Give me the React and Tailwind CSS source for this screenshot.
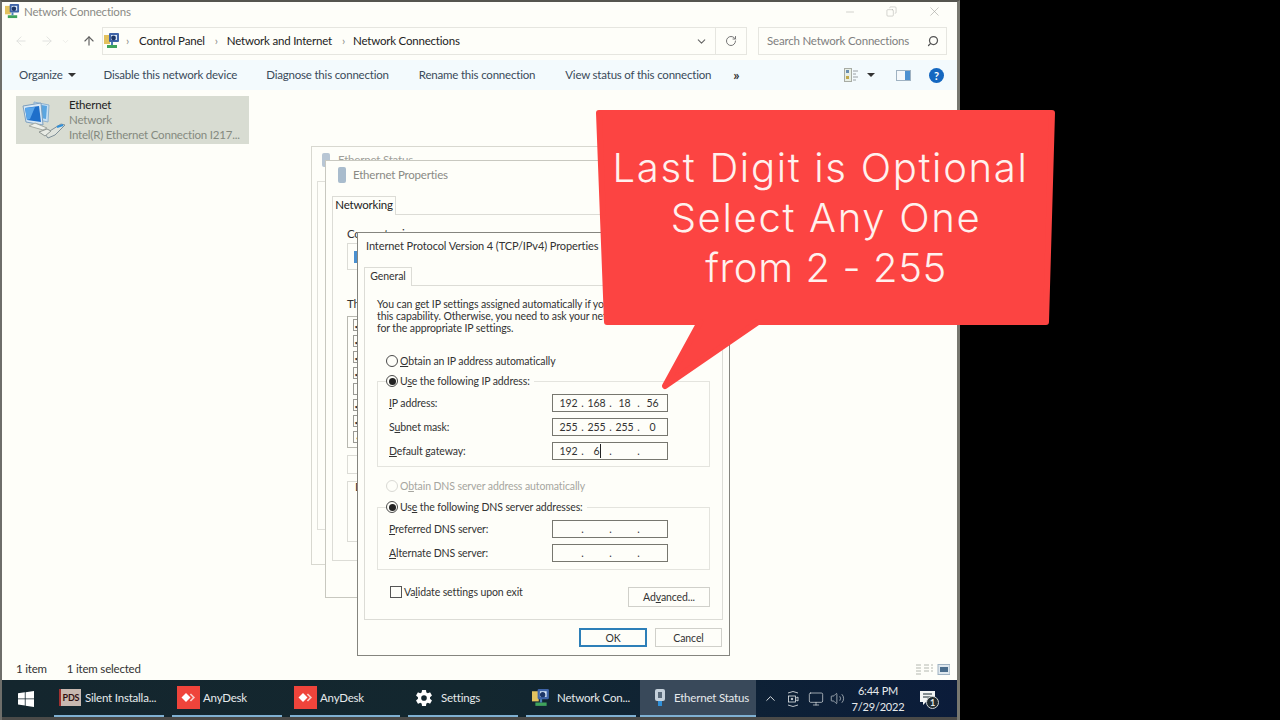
import React from "react";
import { ArrowLeft, ArrowRight, ArrowUp, ChevronDown, ChevronUp, RotateCw, Search, Minus, X, Copy, Monitor, Volume2 } from "lucide-react";
import { IoSettingsSharp } from "react-icons/io5";

const NetIcon = ({ size = 16 }) => (
    <svg width={size} height={size} viewBox="0 0 16 16">
        <rect x="0" y="2" width="6" height="9" fill="#e3c25e" />
        <rect x="5" y="0" width="10" height="9" rx="1" fill="#3f64a8" />
        <rect x="7" y="2" width="6" height="5" fill="#dbe9f8" />
        <circle cx="9.5" cy="5" r="2.4" fill="#1c3566" />
        <rect x="3" y="12" width="10" height="3" fill="#3fa35c" />
        <rect x="7" y="9" width="2" height="3" fill="#4d7fb8" />
    </svg>
);

const EthernetIcon = () => (
    <svg width="44" height="42" viewBox="0 0 44 42">
        <path d="M13 3 L28 6 L27 23 L13 20 Z" fill="#c6dff4" stroke="#8fb2cf" />
        <path d="M15 5 L26 7 L25 20 L15 18 Z" fill="#5aa5e0" />
        <path d="M2 7 L20 4 L22 26 L5 23 Z" fill="#d8e8f5" stroke="#7d9fbe" />
        <path d="M4 9 L18 7 L20 23 L6 21 Z" fill="#1e6fca" />
        <path d="M4 9 L14 8 L9 20 L6 21 Z" fill="#5aa6ea" />
        <path d="M8 27 L22 31 L26 29 L14 24 Z" fill="#eef0ea" stroke="#a6aaa2" />
        <path d="M24 35 L40 25 L44 26 L34 36 L27 39 Z" fill="#dfe3dc" stroke="#7f8f98" />
        <path d="M36 28 L42 26" stroke="#2f8fd8" strokeWidth="2" />
        <path d="M18 33 L26 30 L30 32 L24 37 Z" fill="#e8ebe4" stroke="#8f9692" />
    </svg>
);

const AnyDeskIcon = () => (
    <span className="w-[23px] h-[23px] bg-[#ef443b] flex items-center justify-center shrink-0">
        <svg width="15" height="11" viewBox="0 0 15 11">
            <path d="M5 1 L9.5 5.5 L5 10 L0.5 5.5 Z" fill="#ffffff" />
            <path d="M10 1.5 L14 5.5 L10 9.5 L8.8 8.5 L11.8 5.5 L8.8 2.5 Z" fill="#f8d0cc" />
        </svg>
    </span>
);

const Radio = ({ checked, disabled }) => (
    <span className={`w-3 h-3 rounded-full border flex items-center justify-center shrink-0 bg-[#fefef9] ${disabled ? "border-[#d9d9d4]" : "border-[#4a4a4a]"}`}>
        {checked && <span className="w-[7px] h-[7px] rounded-full bg-[#222222]" />}
    </span>
);

const IpField = ({ parts = ["", "", "", ""], caret }) => (
    <div className="w-[116px] h-[18px] pl-[4px] border border-[#77776f] bg-[#fefef9] flex items-center text-[#333333]">
        {parts.map((p, i) => (
            <React.Fragment key={i}>
                <span className="w-[23px] text-center relative">
                    {p}
                    {caret && i === 1 && <span className="absolute left-[15px] -top-px w-px h-[14px] bg-[#222222]" />}
                </span>
                {i < 3 && <span className="w-[5px] text-center">.</span>}
            </React.Fragment>
        ))}
    </div>
);

const IpRow = ({ label, ...rest }) => (
    <div className="flex items-center justify-between h-[18px]">
        <span>{label}</span>
        <IpField {...rest} />
    </div>
);

const TaskItem = ({ icon, label, active, width = "w-[110px]", pad = "pl-[4px]", gap = "gap-[6px]" }) => (
    <div className={`${width} ${pad} ${gap} h-full flex items-center border-b-2 border-[#7fb0d2] ${active ? "bg-[#39495a]" : ""}`}>
        {icon}
        <span className="whitespace-nowrap">{label}</span>
    </div>
);

const App = () => {
    return (
        <div className="relative w-[1280px] h-[720px] bg-black overflow-hidden font-['Lato',sans-serif] text-[11.5px] tracking-[-0.2px] text-[#333333]">
            {/* Explorer window */}
            <div className="w-[960px] h-[720px] flex flex-col bg-[#fefef9] border-l-2 border-r-[3px] border-t-2 border-l-[#6e6e6a] border-r-[#77776f] border-t-[#55554f]">
                {/* Title bar */}
                <div className="h-[19px] shrink-0 flex items-center pl-[3px] pr-[15px]">
                    <NetIcon size={15} />
                    <span className="ml-[4px] text-[#8a8a85]">Network Connections</span>
                    <div className="ml-auto flex items-center gap-[30px] text-[#a5a5a0]">
                        <Minus size={12} strokeWidth={1} />
                        <Copy size={11} strokeWidth={1} className="-scale-x-100" />
                        <X size={15} strokeWidth={1} />
                    </div>
                </div>
                {/* Address bar */}
                <div className="h-[34px] shrink-0 flex items-center pt-[6px] pl-[12px] pr-[10px]">
                    <ArrowLeft size={14} strokeWidth={1.5} className="text-[#dedfdb]" />
                    <ArrowRight size={14} strokeWidth={1.5} className="ml-[12px] text-[#dedfdb]" />
                    <ChevronDown size={9} className="ml-[7px] text-[#e8e8e4]" />
                    <ArrowUp size={14} strokeWidth={2} className="ml-[12px] text-[#606060]" />
                    <div className="ml-[6px] w-[645px] h-[28px] border border-[#e6e6e0] flex items-center">
                        <span className="ml-[1px]"><NetIcon size={16} /></span>
                        <span className="ml-[6px] text-[#8a8a85]">›</span>
                        <span className="ml-[10px] text-[#222222]">Control Panel</span>
                        <span className="ml-[10px] text-[#8a8a85]">›</span>
                        <span className="ml-[9px] text-[#222222]">Network and Internet</span>
                        <span className="ml-[10px] text-[#8a8a85]">›</span>
                        <span className="ml-[8px] text-[#222222]">Network Connections</span>
                        <ChevronDown size={13} className="ml-auto mr-[7px] text-[#666666]" />
                        <span className="w-[31px] h-full border-l border-[#e6e6e0] flex items-center justify-center">
                            <RotateCw size={12} className="text-[#777777]" />
                        </span>
                    </div>
                    <div className="ml-auto w-[189px] h-[28px] border border-[#e6e6e0] flex items-center pl-[8px] pr-[7px] text-[#808080]">
                        <span>Search Network Connections</span>
                        <Search size={12} strokeWidth={2.5} className="ml-auto -scale-x-100 text-[#555555]" />
                    </div>
                </div>
                {/* Command bar */}
                <div className="h-[30px] mt-[5px] shrink-0 bg-[#f3fafd] flex items-center pl-[17px] pr-[13px] text-[#3a4a5a]">
                    <span>Organize</span>
                    <span className="ml-[5px] w-0 h-0 border-x-[4px] border-x-transparent border-t-[4px] border-t-[#333333]" />
                    <span className="ml-[28px]">Disable this network device</span>
                    <span className="ml-[29px]">Diagnose this connection</span>
                    <span className="ml-[30px]">Rename this connection</span>
                    <span className="ml-[30px]">View status of this connection</span>
                    <span className="ml-[22px] font-bold text-[14px] leading-none text-[#333333]">»</span>
                    <svg width="14" height="14" viewBox="0 0 14 14" className="ml-auto">
                        <rect x="0.5" y="0.5" width="7" height="13" fill="#e8efe6" stroke="#a8aca4" />
                        <rect x="2" y="2" width="3" height="3" fill="#6b8fb0" />
                        <rect x="2" y="8" width="3" height="3" fill="#c2a94b" />
                        <path d="M9 3h5M9 6h3M9 9h5M9 12h3" stroke="#9aa0a4" />
                    </svg>
                    <span className="ml-[9px] w-0 h-0 border-x-[4px] border-x-transparent border-t-[4px] border-t-[#333333]" />
                    <svg width="15" height="11" viewBox="0 0 15 11" className="ml-[21px]">
                        <rect x="0.5" y="0.5" width="14" height="10" fill="#f4f8fb" stroke="#9fb2c2" />
                        <rect x="9" y="1" width="5" height="9" fill="#4d90d0" />
                    </svg>
                    <span className="ml-[18px] w-[15px] h-[15px] rounded-full bg-[#1467c0] text-white font-bold text-[11px] leading-none flex items-center justify-center">?</span>
                </div>
                {/* Content */}
                <div className="flex-1 pt-[6px] pl-[14px]">
                    <div className="w-[233px] h-[48px] bg-[#d8dcd2] flex items-center">
                        <span className="ml-[5px]"><EthernetIcon /></span>
                        <div className="ml-[4px] -mt-[1px] flex flex-col leading-[15px]">
                            <span className="text-[#222222]">Ethernet</span>
                            <span className="text-[#858a80]">Network</span>
                            <span className="text-[#858a80] whitespace-nowrap">Intel(R) Ethernet Connection I217...</span>
                        </div>
                    </div>
                </div>
                {/* Status bar */}
                <div className="h-[22px] shrink-0 flex items-center pl-[14px] pr-[7px]">
                    <span>1 item</span>
                    <span className="ml-[20px]">1 item selected</span>
                    <svg width="34" height="11" viewBox="0 0 34 11" className="ml-auto">
                        <path d="M0 1h5M0 4h5M0 7h5M0 10h5M8 1h5M8 4h5M8 7h5M15 1h2M15 4h2M15 7h2" stroke="#b4b8b0" />
                        <rect x="22" y="0.5" width="12" height="10" fill="#dfe8ee" stroke="#9fb2c2" />
                        <rect x="24" y="3" width="8" height="5" fill="#4a6d8c" />
                    </svg>
                </div>
                {/* Taskbar */}
                <div className="h-[37px] shrink-0 flex items-center bg-gradient-to-r from-[#14262e] via-[#13272f] to-[#0b1c3a] text-[#e6eaec] pr-[5px]">
                    <div className="w-[52px] h-full flex items-center justify-center pr-[4px]">
                        <svg width="16" height="16" viewBox="0 0 16 16" fill="#ffffff">
                            <path d="M0 2.3 L6.8 1.3 V7.4 H0 Z M7.6 1.2 L16 0 V7.4 H7.6 Z M0 8.2 H6.8 V14.4 L0 13.5 Z M7.6 8.2 H16 V16 L7.6 14.8 Z" />
                        </svg>
                    </div>
                    <div className="h-full flex gap-[8px]">
                        <TaskItem
                            label="Silent Installa..."
                            pad="pl-[5px]"
                            gap="gap-[4px]"
                            icon={<span className="w-[22px] h-[17px] shrink-0 bg-[#c8b8b0] text-[#301010] font-bold text-[9px] leading-[17px] text-center border-l-2 border-[#a03030]">PDS</span>}
                        />
                        <TaskItem label="AnyDesk" pad="pl-[5px]" gap="gap-[3px]" icon={<AnyDeskIcon />} />
                        <TaskItem label="AnyDesk" gap="gap-[3px]" icon={<AnyDeskIcon />} />
                        <TaskItem label="Settings" gap="gap-[8px]" icon={<IoSettingsSharp size={18} className="ml-[3px] text-white" />} />
                    </div>
                    <div className="ml-[8px] h-full">
                        <TaskItem label="Network Con..." pad="pl-[6px]" gap="gap-[7px]" icon={<NetIcon size={18} />} />
                    </div>
                    <div className="ml-[4px] h-full">
                        <TaskItem
                            active
                            width="w-[116px]"
                            label="Ethernet Status"
                            icon={
                                <svg width="14" height="20" viewBox="0 0 14 20" className="ml-[9px] mr-[1px]">
                                    <rect x="2" y="1" width="10" height="12" rx="2" fill="#c5d0da" />
                                    <rect x="5" y="4" width="4" height="6" fill="#5a6a7a" />
                                    <rect x="5" y="13" width="4" height="5" fill="#2f8fd8" />
                                </svg>
                            }
                        />
                    </div>
                    <div className="flex-1 h-full flex items-center pl-[7px]">
                        <ChevronUp size={15} strokeWidth={1.5} />
                        <svg width="14" height="18" viewBox="0 0 14 18" fill="none" stroke="#e6eaec" strokeWidth="0.8" className="ml-[8px]">
                            <path d="M2 3 Q7 0 12 3 M2 15 Q7 18 12 15" />
                            <rect x="2.5" y="6" width="7" height="6" />
                            <circle cx="6" cy="9" r="0.8" fill="#e6eaec" />
                            <path d="M10 8 L12 7 V11 L10 10" />
                        </svg>
                        <Monitor size={16} strokeWidth={1} className="ml-[8px]" />
                        <Volume2 size={15} strokeWidth={1} className="ml-[6px]" />
                        <div className="ml-[8px] w-[50px] flex flex-col items-center text-[11px] leading-[16px] whitespace-nowrap">
                            <span>6:44 PM</span>
                            <span>7/29/2022</span>
                        </div>
                        <div className="ml-[17px] relative w-[18px] h-[18px]">
                            <svg width="16" height="16" viewBox="0 0 16 16">
                                <path d="M0 1 H15 V12 H6 L3 15 V12 H0 Z" fill="#f2f4f4" />
                                <path d="M3 4h9M3 7h9" stroke="#14262e" />
                            </svg>
                            <span className="absolute left-[6px] top-[6px] w-[13px] h-[13px] rounded-full bg-[#222c30] border border-[#d0d4d4] text-[9px] font-bold leading-none flex items-center justify-center">1</span>
                        </div>
                    </div>
                </div>
                <div className="h-[3px] shrink-0 bg-[#4a4a48]" />
            </div>

            {/* Ethernet Status window (mostly hidden) */}
            <div className="absolute left-[311px] top-[146px] w-[380px] h-[419px] bg-[#fefef9] border border-[#d8d8d0] px-[5px] pt-[5px] text-[#a0a09a]">
                <div className="h-[16px] ml-[5px] flex items-center gap-[8px]">
                    <span className="w-[8px] h-[14px] rounded-[2px] bg-[#b8c6d4]" />
                    <span>Ethernet Status</span>
                </div>
                <div className="mt-[13px] w-full h-[349px] border border-[#e0e0da]" />
            </div>

            {/* Ethernet Properties window */}
            <div className="absolute left-[325px] top-[160px] w-[390px] h-[438px] bg-[#fefef9] border border-[#c8c8c0] px-[6px]">
                <div className="h-[28px] flex items-center gap-[7px] pl-[6px] text-[#8a8a85]">
                    <span className="w-[8px] h-[16px] rounded-[2px] bg-[#a9bccd]" />
                    <span>Ethernet Properties</span>
                </div>
                <div className="w-[64px] h-[19px] mt-[7px] pb-[2px] border border-b-0 border-[#dcdcd6] flex items-center justify-center text-[#222222] relative z-10 bg-[#fefef9]">Networking</div>
                <div className="w-full h-[347px] -mt-px border border-[#dcdcd6] px-[14px] pt-[10px]">
                    <div className="h-[17px] text-[#333333]">Connect using:</div>
                    <div className="mt-[1px] w-full h-[27px] border border-[#dcdcd6] pl-[6px] flex items-center">
                        <span className="w-[6px] h-[12px] bg-[#4a90d0]" />
                    </div>
                    <div className="mt-[25px] h-[18px] text-[#333333]">This connection uses:</div>
                    <div className="mt-[3px] w-full h-[132px] border border-[#b8b8b0] pl-[5px] pt-[2px] flex flex-col gap-[4px]">
                        {["✓", "✓", "✓", "✓", "", "✓", "✓", "‹"].map((c, i) => (
                            <span key={i} className="w-[8px] h-[12px] bg-[#fefef9] border-l border-y border-[#9a9a94] flex items-center justify-center text-[9px] leading-none font-bold">{c}</span>
                        ))}
                    </div>
                    <div className="mt-[7px] w-[80px] h-[19px] border border-[#dcdcd6]" />
                    <div className="mt-[7px] w-full h-[61px] border border-[#dcdcd6] pl-[7px] leading-[10px] text-[#333333]">Description</div>
                </div>
            </div>

            {/* IPv4 dialog */}
            <div className="absolute left-[357px] top-[232px] w-[373px] h-[424px] bg-[#fefef9] border border-[#85857f] px-[6px] text-[10.5px] tracking-[-0.1px] leading-[12px]">
                <div className="h-[26px] flex items-center pl-[2px] text-[11px] text-[#333333] whitespace-nowrap">Internet Protocol Version 4 (TCP/IPv4) Properties</div>
                <div className="mt-[8px] w-[48px] h-[19px] pb-[2px] border border-b-0 border-[#dcdcd6] flex items-center justify-center bg-[#fefef9] relative z-10">General</div>
                <div className="w-full h-[335px] -mt-px border border-[#dcdcd6] pl-[12px] pr-[11px] pt-[12px]">
                    <p className="leading-[12px] whitespace-nowrap">
                        You can get IP settings assigned automatically if your network supports
                        <br />
                        this capability. Otherwise, you need to ask your network administrator
                        <br />
                        for the appropriate IP settings.
                    </p>
                    <label className="mt-[21px] ml-[9px] flex items-center gap-[2px]">
                        <Radio />
                        <span><u>O</u>btain an IP address automatically</span>
                    </label>
                    <div className="mt-[14px] w-[333px] h-[86px] border border-[#e4e4de] px-[11px] relative">
                        <label className="absolute left-[8px] -top-[7px] bg-[#fefef9] pr-[4px] flex items-center gap-[2px]">
                            <Radio checked />
                            <span>U<u>s</u>e the following IP address:</span>
                        </label>
                        <div className="pt-[12px] flex flex-col gap-[6px] w-[279px]">
                            <IpRow label={<><u>I</u>P address:</>} parts={["192", "168", "18", "56"]} />
                            <IpRow label={<>S<u>u</u>bnet mask:</>} parts={["255", "255", "255", "0"]} />
                            <IpRow label={<><u>D</u>efault gateway:</>} parts={["192", "6", "", ""]} caret />
                        </div>
                    </div>
                    <label className="mt-[13px] ml-[9px] flex items-center gap-[2px] text-[#a6a6a0]">
                        <Radio disabled />
                        <span>O<u>b</u>tain DNS server address automatically</span>
                    </label>
                    <div className="mt-[15px] w-[333px] h-[63px] border border-[#e4e4de] px-[11px] relative">
                        <label className="absolute left-[8px] -top-[7px] bg-[#fefef9] pr-[4px] flex items-center gap-[2px]">
                            <Radio checked />
                            <span>Us<u>e</u> the following DNS server addresses:</span>
                        </label>
                        <div className="pt-[12px] flex flex-col gap-[6px] w-[279px]">
                            <IpRow label={<><u>P</u>referred DNS server:</>} />
                            <IpRow label={<><u>A</u>lternate DNS server:</>} />
                        </div>
                    </div>
                    <div className="mt-[16px] w-[333px] flex items-start justify-between">
                        <label className="ml-[13px] flex items-center gap-[2px]">
                            <span className="w-3 h-3 border border-[#555555] bg-[#fefef9]" />
                            <span>Va<u>l</u>idate settings upon exit</span>
                        </label>
                        <button className="mt-[1px] w-[82px] h-[20px] border border-[#d0d0ca] text-[#333333]">Ad<u>v</u>anced...</button>
                    </div>
                </div>
                <div className="mt-[8px] pr-[1px] flex justify-end gap-[8px]">
                    <button className="w-[68px] h-[19px] border-2 border-[#2d7fb8] text-[#333333]">OK</button>
                    <button className="w-[67px] h-[19px] border border-[#d0d0ca] text-[#333333]">Cancel</button>
                </div>
            </div>

            {/* Callout */}
            <div className="absolute left-[590px] top-[105px] w-[470px] h-[290px]">
                <svg width="470" height="290" viewBox="0 0 470 290" className="absolute inset-0">
                    <polygon
                        points="9,8 462,8 456,217 168,217 75,281 110,217 17,217"
                        fill="#fc4442"
                        stroke="#fc4442"
                        strokeWidth="6"
                        strokeLinejoin="round"
                    />
                </svg>
                <div className="absolute left-[5px] top-[38px] w-[460px] flex flex-col items-center text-[#fff1ee] text-[40px] leading-[50px] font-['Inter',sans-serif] font-light whitespace-nowrap">
                    <span className="mr-[9px] tracking-[1.7px]">Last Digit is Optional</span>
                    <span className="ml-[2px] tracking-[1.7px]">Select Any One</span>
                    <span className="ml-[2px] tracking-[0.6px]">from 2 - 255</span>
                </div>
            </div>
        </div>
    );
};

export default App;
